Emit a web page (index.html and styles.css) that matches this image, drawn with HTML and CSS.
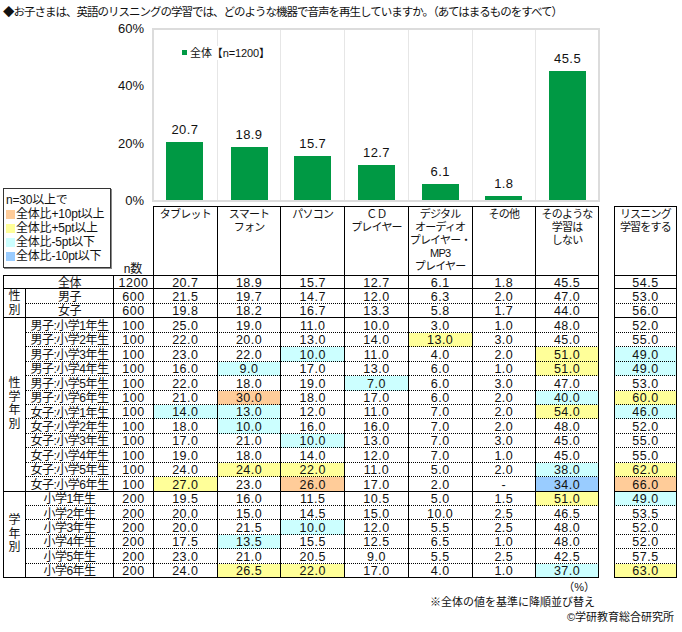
FILE: index.html
```html
<!DOCTYPE html>
<html lang="ja">
<head>
<meta charset="utf-8">
<title>英語のリスニング学習 音声再生機器</title>
<link rel="stylesheet" href="styles.css">
</head>
<body>
<div class="page">
  <div class="title">◆お子さまは、英語のリスニングの学習では、どのような機器で音声を再生していますか。（あてはまるものをすべて）</div>

  <div class="top">
    <div class="axis"><span>60%</span><span>40%</span><span>20%</span><span>0%</span></div>
    <div class="chart">
      <div class="plot">
        <div class="series"><i class="sq"></i>全体【n=1200】</div>
        <div class="cat"><span class="val">20.7</span><span class="bar" style="height:59.34px"></span></div>
        <div class="cat"><span class="val">18.9</span><span class="bar" style="height:54.18px"></span></div>
        <div class="cat"><span class="val">15.7</span><span class="bar" style="height:45.01px"></span></div>
        <div class="cat"><span class="val">12.7</span><span class="bar" style="height:36.41px"></span></div>
        <div class="cat"><span class="val">6.1</span><span class="bar" style="height:17.49px"></span></div>
        <div class="cat"><span class="val">1.8</span><span class="bar" style="height:5.16px"></span></div>
        <div class="cat"><span class="val">45.5</span><span class="bar" style="height:130.43px"></span></div>
      </div>
    </div>
    <div class="key">
      <div>n=30以上で</div>
      <div><i class="sw o"></i>全体比+10pt以上</div>
      <div><i class="sw y"></i>全体比+5pt以上</div>
      <div><i class="sw c"></i>全体比-5pt以下</div>
      <div><i class="sw b"></i>全体比-10pt以下</div>
    </div>
    <div class="nlabel">n数</div>
    <div class="hd">タブレット</div>
    <div class="hd">スマート<br>フォン</div>
    <div class="hd">パソコン</div>
    <div class="hd">ＣＤ<br>プレイヤー</div>
    <div class="hd">デジタル<br>オーディオ<br>プレイヤー・<br>MP3<br>プレイヤー</div>
    <div class="hd">その他</div>
    <div class="hd end">そのような<br>学習は<br>しない</div>
    <div class="hd side">リスニング<br>学習をする</div>
  </div>

  <div class="table">
    <div class="grp g1">性<br>別</div>
    <div class="grp g2">性<br>学<br>年<br>別</div>
    <div class="grp g3">学<br>年<br>別</div>

    <div class="row end first"><div class="nm all">全体</div><div>1200</div><div>20.7</div><div>18.9</div><div>15.7</div><div>12.7</div><div>6.1</div><div>1.8</div><div>45.5</div><div class="s">54.5</div></div>
    <div class="row dot"><div class="nm">男子</div><div>600</div><div>21.5</div><div>19.7</div><div>14.7</div><div>12.0</div><div>6.3</div><div>2.0</div><div>47.0</div><div class="s">53.0</div></div>
    <div class="row end"><div class="nm">女子</div><div>600</div><div>19.8</div><div>18.2</div><div>16.7</div><div>13.3</div><div>5.8</div><div>1.7</div><div>44.0</div><div class="s">56.0</div></div>

    <div class="row dot"><div class="nm">男子:小学1年生</div><div>100</div><div>25.0</div><div>19.0</div><div>11.0</div><div>10.0</div><div>3.0</div><div>1.0</div><div>48.0</div><div class="s">52.0</div></div>
    <div class="row dot"><div class="nm">男子:小学2年生</div><div>100</div><div>22.0</div><div>20.0</div><div>13.0</div><div>14.0</div><div class="y">13.0</div><div>3.0</div><div>45.0</div><div class="s">55.0</div></div>
    <div class="row dot"><div class="nm">男子:小学3年生</div><div>100</div><div>23.0</div><div>22.0</div><div class="c">10.0</div><div>11.0</div><div>4.0</div><div>2.0</div><div class="y">51.0</div><div class="s c">49.0</div></div>
    <div class="row dot"><div class="nm">男子:小学4年生</div><div>100</div><div>16.0</div><div class="c">9.0</div><div>17.0</div><div>13.0</div><div>6.0</div><div>1.0</div><div class="y">51.0</div><div class="s c">49.0</div></div>
    <div class="row dot"><div class="nm">男子:小学5年生</div><div>100</div><div>22.0</div><div>18.0</div><div>19.0</div><div class="c">7.0</div><div>6.0</div><div>3.0</div><div>47.0</div><div class="s">53.0</div></div>
    <div class="row dot"><div class="nm">男子:小学6年生</div><div>100</div><div>21.0</div><div class="o">30.0</div><div>18.0</div><div>17.0</div><div>6.0</div><div>2.0</div><div class="c">40.0</div><div class="s y">60.0</div></div>
    <div class="row dot"><div class="nm">女子:小学1年生</div><div>100</div><div class="c">14.0</div><div class="c">13.0</div><div>12.0</div><div>11.0</div><div>7.0</div><div>2.0</div><div class="y">54.0</div><div class="s c">46.0</div></div>
    <div class="row dot"><div class="nm">女子:小学2年生</div><div>100</div><div>18.0</div><div class="c">10.0</div><div>16.0</div><div>16.0</div><div>7.0</div><div>2.0</div><div>48.0</div><div class="s">52.0</div></div>
    <div class="row dot"><div class="nm">女子:小学3年生</div><div>100</div><div>17.0</div><div>21.0</div><div class="c">10.0</div><div>13.0</div><div>7.0</div><div>3.0</div><div>45.0</div><div class="s">55.0</div></div>
    <div class="row dot"><div class="nm">女子:小学4年生</div><div>100</div><div>19.0</div><div>18.0</div><div>14.0</div><div>12.0</div><div>7.0</div><div>1.0</div><div>45.0</div><div class="s">55.0</div></div>
    <div class="row dot"><div class="nm">女子:小学5年生</div><div>100</div><div>24.0</div><div class="y">24.0</div><div class="y">22.0</div><div>11.0</div><div>5.0</div><div>2.0</div><div class="c">38.0</div><div class="s y">62.0</div></div>
    <div class="row end"><div class="nm">女子:小学6年生</div><div>100</div><div class="y">27.0</div><div>23.0</div><div class="o">26.0</div><div>17.0</div><div>2.0</div><div>-</div><div class="b">34.0</div><div class="s o">66.0</div></div>

    <div class="row dot"><div class="nm">小学1年生</div><div>200</div><div>19.5</div><div>16.0</div><div>11.5</div><div>10.5</div><div>5.0</div><div>1.5</div><div class="y">51.0</div><div class="s c">49.0</div></div>
    <div class="row dot"><div class="nm">小学2年生</div><div>200</div><div>20.0</div><div>15.0</div><div>14.5</div><div>15.0</div><div>10.0</div><div>2.5</div><div>46.5</div><div class="s">53.5</div></div>
    <div class="row dot"><div class="nm">小学3年生</div><div>200</div><div>20.0</div><div>21.5</div><div class="c">10.0</div><div>12.0</div><div>5.5</div><div>2.5</div><div>48.0</div><div class="s">52.0</div></div>
    <div class="row dot"><div class="nm">小学4年生</div><div>200</div><div>17.5</div><div class="c">13.5</div><div>15.5</div><div>12.5</div><div>6.5</div><div>1.0</div><div>48.0</div><div class="s">52.0</div></div>
    <div class="row dot"><div class="nm">小学5年生</div><div>200</div><div>23.0</div><div>21.0</div><div>20.5</div><div>9.0</div><div>5.5</div><div>2.5</div><div>42.5</div><div class="s">57.5</div></div>
    <div class="row end"><div class="nm">小学6年生</div><div>200</div><div>24.0</div><div class="y">26.5</div><div class="y">22.0</div><div>17.0</div><div>4.0</div><div>1.0</div><div class="c">37.0</div><div class="s y">63.0</div></div>
  </div>

  <div class="notes">
    <div class="note-main">
      <div>（%）</div>
      <div>※全体の値を基準に降順並び替え</div>
    </div>
    <div class="credit">©学研教育総合研究所</div>
  </div>
</div>
</body>
</html>
```

FILE: styles.css
```css
* { box-sizing: border-box; }
html, body { margin: 0; padding: 0; background: #fff; }
body {
  font-family: "Liberation Sans", "Noto Sans CJK JP", sans-serif;
  color: #111;
  width: 682px;
  height: 632px;
  overflow: hidden;
}
.page { padding-left: 3px; }

.title {
  height: 22px;
  padding-top: 2px;
  font-size: 11.5px;
  line-height: 20px;
  letter-spacing: -1px;
  white-space: nowrap;
}

.top, .table {
  display: grid;
  grid-template-columns: 22px 88px 40px repeat(7, 63.714px) 15px 63px;
}
.top { grid-template-rows: 166px 18px 69px; }

.axis {
  grid-column: 3;
  grid-row: 1 / span 2;
  align-self: start;
  height: 186px;
  display: flex;
  flex-direction: column;
  justify-content: space-between;
  align-items: flex-end;
  padding-right: 9px;
  font-size: 13px;
  line-height: 14px;
}

.chart {
  grid-column: 4 / span 7;
  grid-row: 1 / span 2;
  padding-top: 7px;
}
.plot {
  position: relative;
  height: 172px;
  display: grid;
  grid-template-columns: repeat(7, 1fr);
  outline: 2px solid #dcdcdc;
  outline-offset: -1px;
}
.cat {
  display: flex;
  flex-direction: column;
  justify-content: flex-end;
  align-items: center;
}
.cat + .cat { border-left: 1px solid #e6e6e6; }
.val {
  font-size: 13px;
  line-height: 14px;
  margin-bottom: 5px;
  letter-spacing: 0.4px;
}
.bar {
  display: block;
  width: 37px;
  background: #009944;
}
.series {
  position: absolute;
  left: 27px;
  top: 17px;
  padding: 0 2px;
  background: #fff;
  font-size: 11px;
  line-height: 14px;
  letter-spacing: -0.1px;
  white-space: nowrap;
}
.sq {
  display: inline-block;
  width: 5px;
  height: 5px;
  margin-right: 3px;
  vertical-align: 2px;
  background: #009944;
}

.key {
  grid-column: 1 / span 2;
  grid-row: 2 / span 2;
  align-self: start;
  width: 108px;
  height: 80px;
  border: 1px solid #333;
  box-shadow: 1px 1px 0 #888;
  padding: 4px 0 0 2px;
  font-size: 12px;
  line-height: 14px;
  letter-spacing: -0.2px;
  white-space: nowrap;
  background: #fff;
}
.sw {
  display: inline-block;
  width: 9px;
  height: 9px;
  margin-right: 1px;
  vertical-align: -1px;
}

.nlabel {
  grid-column: 3;
  grid-row: 3;
  align-self: end;
  text-align: center;
  font-size: 12px;
  line-height: 12px;
}

.hd {
  grid-row: 3;
  border-top: 1px solid #000;
  border-left: 1px solid #000;
  padding-top: 1px;
  text-align: center;
  font-size: 11px;
  line-height: 13px;
  letter-spacing: -0.8px;
  white-space: nowrap;
}
.hd.end { border-right: 1px solid #000; }
.hd.side { grid-column: 12; border-right: 1px solid #000; }

.table { grid-template-rows: repeat(21, 14.44px); }

.grp {
  grid-column: 1;
  border-left: 1px solid #000;
  border-bottom: 1px solid #000;
  display: flex;
  align-items: center;
  justify-content: center;
  text-align: center;
  font-size: 12px;
  line-height: 14px;
}
.g1 { grid-row: 2 / span 2; }
.g2 { grid-row: 4 / span 12; line-height: 13.5px; }
.g3 { grid-row: 16 / span 6; line-height: 13.5px; }

.row { display: contents; }
.row > div {
  border-left: 1px solid #000;
  padding-top: 1.5px;
  text-align: center;
  font-size: 12.5px;
  line-height: 13px;
  letter-spacing: 0.5px;
  white-space: nowrap;
}
.row.dot > div { border-bottom: 1px dotted #000; }
.row.end > div { border-bottom: 1px solid #000; }
.row.first > div { border-top: 1px solid #000; padding-top: 0.5px; }
.row > div:nth-last-child(2) { border-right: 1px solid #000; }
.row > .s { grid-column: 12; border-right: 1px solid #000; }
.row > .nm { font-size: 12px; letter-spacing: -0.5px; padding-top: 1.6px; }
.row.first > .nm { padding-top: 0.6px; }
.row > .all { grid-column: 1 / span 2; padding-left: 22px; }

.o { background: #ffcc99; }
.y { background: #ffff99; }
.c { background: #ccffff; }
.b { background: #99ccff; }

.notes {
  padding-top: 2px;
  font-size: 11px;
  line-height: 15px;
  white-space: nowrap;
}
.note-main { width: 592px; text-align: right; }
.credit { width: 671px; text-align: right; }
```
